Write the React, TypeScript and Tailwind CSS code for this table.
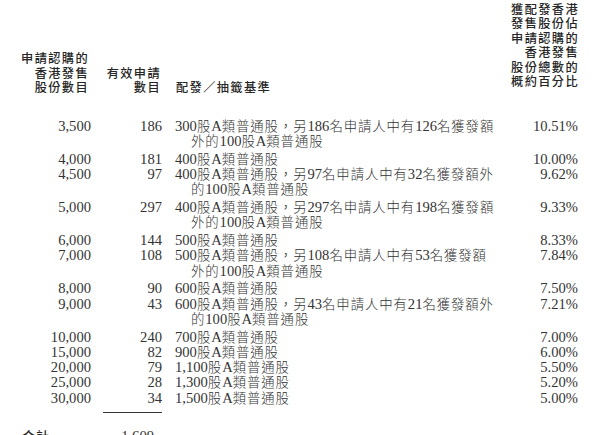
import React from "react";

type Row = { a: string; n: string; lines: string[]; p: string };

const rows: Row[] = [
  { a: "3,500", n: "186", lines: ["300股A類普通股，另186名申請人中有126名獲發額", "外的100股A類普通股"], p: "10.51%" },
  { a: "4,000", n: "181", lines: ["400股A類普通股"], p: "10.00%" },
  { a: "4,500", n: "97", lines: ["400股A類普通股，另97名申請人中有32名獲發額外", "的100股A類普通股"], p: "9.62%" },
  { a: "5,000", n: "297", lines: ["400股A類普通股，另297名申請人中有198名獲發額", "外的100股A類普通股"], p: "9.33%" },
  { a: "6,000", n: "144", lines: ["500股A類普通股"], p: "8.33%" },
  { a: "7,000", n: "108", lines: ["500股A類普通股，另108名申請人中有53名獲發額", "外的100股A類普通股"], p: "7.84%" },
  { a: "8,000", n: "90", lines: ["600股A類普通股"], p: "7.50%" },
  { a: "9,000", n: "43", lines: ["600股A類普通股，另43名申請人中有21名獲發額外", "的100股A類普通股"], p: "7.21%" },
  { a: "10,000", n: "240", lines: ["700股A類普通股"], p: "7.00%" },
  { a: "15,000", n: "82", lines: ["900股A類普通股"], p: "6.00%" },
  { a: "20,000", n: "79", lines: ["1,100股A類普通股"], p: "5.50%" },
  { a: "25,000", n: "28", lines: ["1,300股A類普通股"], p: "5.20%" },
  { a: "30,000", n: "34", lines: ["1,500股A類普通股"], p: "5.00%" },
];

const CJK = /([\u3000-\u9fff\uff00-\uffef]+)/;
const CJK_TEST = /[\u3000-\u9fff\uff00-\uffef]/;

function Mixed({ text }: { text: string }) {
  return (
    <>
      {text.split(CJK).map((part, i) =>
        part === "" ? null : CJK_TEST.test(part) ? (
          <span
            key={i}
            className="font-['Noto_Sans_CJK_TC',sans-serif] font-light text-[13.4px] tracking-[0.9px] leading-[10px]"
          >
            {part}
          </span>
        ) : (
          <span key={i}>{part}</span>
        )
      )}
    </>
  );
}

const grid = "grid grid-cols-[91px_71px_1fr_80px]";
const head =
  "font-['Noto_Sans_CJK_TC','Noto_Sans',sans-serif] font-medium text-[12.2px] tracking-[1.4px] leading-[14.4px] text-[#262626] whitespace-nowrap";
const line = "h-[15.25px]";

export default function App() {
  return (
    <div className="w-[600px] h-[435px] overflow-hidden bg-white pt-[2px] pr-[22px]">
      {/* header */}
      <div className={`${grid} items-end`}>
        <div className={`${head} text-right pr-[2px]`}>
          <div>申請認購的</div>
          <div>香港發售</div>
          <div>股份數目</div>
        </div>
        <div className={`${head} text-right pr-[1px]`}>
          <div>有效申請</div>
          <div>數目</div>
        </div>
        <div className={`${head} pl-[14px]`}>
          <div>配發／抽籤基準</div>
        </div>
        <div className={`${head} text-right mb-[6px] -mr-[1px]`}>
          <div>獲配發香港</div>
          <div>發售股份佔</div>
          <div>申請認購的</div>
          <div>香港發售</div>
          <div>股份總數的</div>
          <div>概約百分比</div>
        </div>
      </div>

      {/* body */}
      <div className="mt-[24.5px] font-['Liberation_Serif','Noto_Sans_CJK_TC',serif] text-[14.6px] leading-[15.25px] text-[#333333]">
        {rows.map((r) => (
          <div key={r.a} className={`${grid} ${r.lines.length > 1 ? "pb-[2.5px]" : ""}`}>
            <div className={`${line} text-right`}>{r.a}</div>
            <div className={`${line} text-right`}>{r.n}</div>
            <div className="pl-[13px] whitespace-nowrap">
              {r.lines.map((l, i) => (
                <div key={i} className={`${line} ${i > 0 ? "pl-[16px]" : ""}`}>
                  <Mixed text={l} />
                </div>
              ))}
            </div>
            <div className={`${line} text-right`}>{r.p}</div>
          </div>
        ))}

        <div className={`${grid} mt-[6px]`}>
          <div />
          <div className="ml-[12px] border-t border-[#333333]" />
        </div>

        <div className={`${grid} mt-[16px]`}>
          <div className={`${line} pl-[22px]`}>
            <span className="font-['Noto_Sans_CJK_TC',sans-serif] font-medium text-[13px] tracking-[1px] leading-[10px] text-[#262626]">
              合計
            </span>
          </div>
          <div className={`${line} text-right pr-[8px]`}>1,609</div>
          <div />
          <div />
        </div>
      </div>
    </div>
  );
}
